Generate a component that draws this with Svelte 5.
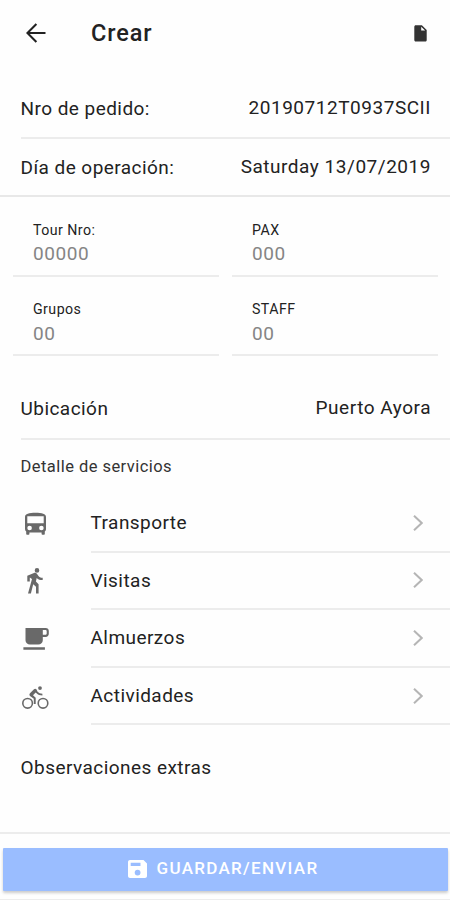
<script lang="ts">
  type IconName = 'bus' | 'walk' | 'cafe' | 'bike';

  const order = [
    { label: 'Nro de pedido:', value: '20190712T0937SCII' },
    { label: 'Día de operación:', value: 'Saturday 13/07/2019' }
  ];

  const fields = [
    { label: 'Tour Nro:', placeholder: '00000' },
    { label: 'PAX', placeholder: '000' },
    { label: 'Grupos', placeholder: '00' },
    { label: 'STAFF', placeholder: '00' }
  ];

  const services: { name: string; icon: IconName }[] = [
    { name: 'Transporte', icon: 'bus' },
    { name: 'Visitas', icon: 'walk' },
    { name: 'Almuerzos', icon: 'cafe' },
    { name: 'Actividades', icon: 'bike' }
  ];
</script>

{#snippet serviceIcon(name: IconName)}
  <svg class="service-icon" viewBox="0 0 30 30" aria-hidden="true">
    {#if name === 'bus'}
      <path fill-rule="evenodd" d="M4 8C4 4.800 8 3.800 14.500 3.800S25 4.800 25 8v12c0 1.100-.4 2-1.200 2.600V25c0 .5-.3.800-.8.800h-1.600c-.5 0-.8-.3-.8-.8v-1.600H8.400V25c0 .5-.3.800-.8.800H6c-.5 0-.8-.3-.8-.8v-2.400C4.400 22 4 21.100 4 20zM6.300 7.300v7h16.400v-7zM8.600 16.700a2.300 2.300 0 1 0 0 4.600a2.300 2.300 0 1 0 0-4.600zM20.400 16.700a2.300 2.300 0 1 0 0 4.600a2.300 2.300 0 1 0 0-4.600z" />
    {:else if name === 'walk'}
      <path d="M16 6.700a2.300 2.300 0 1 0 0-4.600a2.300 2.300 0 1 0 0 4.600zM11 13L7 27.500h2.900l2.300-9.300 2.800 2.500v6.800h2.600v-9.300L14.900 15.500l.8-3.600c1.400 1.500 3.400 2.200 6 2.200v-2.300c-2.100 0-3.700-.8-4.600-2.300l-1.200-1.700c-.5-.7-1.200-1-1.900-1-.4 0-.7.1-1 .2L6.300 9.700v5.900h2.500v-4.100z" />
    {:else if name === 'cafe'}
      <path fill-rule="evenodd" d="M4.500 4h20.200c1.900 0 3.100 1.300 3.100 3.100v2.700c0 1.900-1.300 3.100-3.100 3.100h-2.900v3.400c0 2.500-2 4.300-4.500 4.300H9c-2.500 0-4.500-1.800-4.500-4.300zM21.800 6.100v4.700h2.400c.9 0 1.500-.5 1.500-1.300V7.400c0-.8-.6-1.300-1.500-1.300zM2.400 23.200h21.500v2.600H2.400z" />
    {:else}
      <path fill-rule="evenodd" d="M6.600 15.700a5.600 5.600 0 1 0 0 11.200a5.600 5.600 0 1 0 0-11.200zm0 1.600a4 4 0 1 1 0 8a4 4 0 1 1 0-8zM22 15.700a5.600 5.600 0 1 0 0 11.200a5.600 5.600 0 1 0 0-11.200zm0 1.600a4 4 0 1 1 0 8a4 4 0 1 1 0-8z" />
      <path d="M19 8a1.900 1.900 0 1 0 0-3.800A1.900 1.900 0 0 0 19 8zM16.600 9.800c1.200 1.200 2.700 1.900 4.800 1.900v1.800c-2.400 0-4.500-.8-5.900-2.200l-.8-.8-2.700 2.700 2.700 2.500v6.400h-1.900v-5.300L9 13.900c-.8-.7-.8-1.900 0-2.700L13 7.300c.7-.7 1.700-.7 2.400 0z" />
    {/if}
  </svg>
{/snippet}

<div class="page">
  <header class="toolbar">
    <button class="back" aria-label="Volver">
      <svg viewBox="0 0 20 20" width="20" height="20">
        <path d="M10.400.9L1.400 10l9 9.100M1.500 10h18" />
      </svg>
    </button>
    <h1>Crear</h1>
    <svg class="doc" viewBox="0 0 13 17" width="13" height="17">
      <path d="M1.700.3h6.200L12.700 5v9.900c0 .9-.7 1.600-1.600 1.600H1.700C.9 16.500.3 15.800.3 15V1.900C.3 1 .9.300 1.700.3zM7.200 1.800v3.800h3.900z" />
    </svg>
  </header>

  <main>
    <section class="order">
      {#each order as row}
        <div class="row">
          <span>{row.label}</span>
          <span class="value">{row.value}</span>
        </div>
      {/each}
    </section>

    <section class="fields">
      {#each fields as field}
        <label class="field">
          <span>{field.label}</span>
          <input type="text" placeholder={field.placeholder} />
        </label>
      {/each}
    </section>

    <div class="row location">
      <span>Ubicación</span>
      <span class="value">Puerto Ayora</span>
    </div>

    <h2>Detalle de servicios</h2>
    <ul class="services">
      {#each services as service}
        <li>
          {@render serviceIcon(service.icon)}
          <div class="service">
            <span>{service.name}</span>
            <svg class="chevron" viewBox="0 0 10 16" width="10" height="16">
              <path d="M1 .8L8.700 8 1 15.200" />
            </svg>
          </div>
        </li>
      {/each}
    </ul>

    <p class="notes">Observaciones extras</p>
  </main>

  <footer>
    <button class="save">
      <svg viewBox="0 0 19 18" width="19" height="18">
        <path fill-rule="evenodd" d="M2 0h13.500L19 3.500V16c0 1.100-.9 2-2 2H2c-1.100 0-2-.9-2-2V2C0 .9.900 0 2 0zM2.700 2.700v3.200h9.800V2.700zM9.600 9.700a2.900 2.900 0 1 0 0 5.800a2.900 2.900 0 1 0 0-5.800z" />
      </svg>
      <span>GUARDAR/ENVIAR</span>
    </button>
  </footer>
</div>

<style>
  :global(body) {
    margin: 0;
    background: #fefefe;
  }
  .page {
    width: 450px;
    height: 900px;
    display: flex;
    flex-direction: column;
    overflow: hidden;
    box-sizing: border-box;
    border-bottom: 1px solid #ededed;
    background: #fefefe;
    color: #222;
    font-family: Roboto, sans-serif;
    font-size: 19px;
    letter-spacing: 0.45px;
  }
  button {
    border: 0;
    padding: 0;
    font: inherit;
  }
  .toolbar {
    display: flex;
    align-items: center;
    height: 66px;
    padding: 0 23px 0 26px;
  }
  .back {
    display: flex;
    width: 65px;
    background: none;
  }
  .back path {
    fill: none;
    stroke: #222;
    stroke-width: 2.1;
  }
  h1 {
    flex: 1;
    margin: 0;
    font-size: 23.5px;
    font-weight: 500;
    letter-spacing: 0.9px;
  }
  .doc {
    fill: #333;
  }
  main {
    flex: 1;
  }
  .order {
    margin-top: 13px;
    border-bottom: 2px solid #e8e8e8;
  }
  .row {
    display: flex;
    align-items: center;
    justify-content: space-between;
    height: 56px;
    margin-left: 20.5px;
    padding-right: 19px;
  }
  .order .row:first-child {
    height: 58px;
    border-bottom: 2px solid #ececec;
  }
  .value {
    margin-top: -2px;
    letter-spacing: 0.53px;
  }
  .fields {
    display: grid;
    grid-template-columns: 206px 206px;
    column-gap: 13px;
    padding-left: 13px;
  }
  .field {
    display: flex;
    flex-direction: column;
    height: 79.5px;
    padding: 23.5px 20px 0;
    box-sizing: border-box;
    border-bottom: 2px solid #ececec;
    font-size: 14.2px;
    line-height: 18px;
  }
  .field input {
    width: 100%;
    height: 24px;
    margin-top: 3px;
    padding: 0;
    border: 0;
    outline: 0;
    background: none;
    font: inherit;
    font-size: 19px;
    line-height: 22px;
    letter-spacing: 0.6px;
  }
  .field input::placeholder {
    color: #858585;
    opacity: 1;
  }
  .location {
    height: 60px;
    margin-top: 22px;
    border-bottom: 2px solid #ececec;
  }
  h2 {
    margin: 0;
    padding: 16px 20.5px 0;
    font-size: 16.5px;
    font-weight: 400;
    line-height: 22px;
    color: #333;
  }
  .services {
    margin: 17px 0 0;
    padding: 0;
    list-style: none;
  }
  li {
    display: flex;
    align-items: center;
    height: 57.6px;
    padding-left: 21px;
  }
  .service-icon {
    width: 30px;
    height: 30px;
    margin-right: 39.5px;
    fill: #696969;
  }
  .service {
    flex: 1;
    display: flex;
    align-items: center;
    justify-content: space-between;
    height: 100%;
    box-sizing: border-box;
    padding-right: 27px;
    border-bottom: 2px solid #ececec;
  }
  .chevron path {
    fill: none;
    stroke: #b5b5b5;
    stroke-width: 2;
  }
  .notes {
    margin: 31px 20.5px 0;
    line-height: 24px;
  }
  footer {
    padding: 14px 2px 8px 3px;
    border-top: 2px solid #ececec;
  }
  .save {
    display: flex;
    align-items: center;
    justify-content: center;
    gap: 10px;
    width: 100%;
    height: 43px;
    padding: 0 5px 3px 0;
    border-radius: 1px;
    background: #9abdff;
    box-shadow: 0 2px 3px rgba(0, 0, 0, 0.2);
    color: #fff;
    font-size: 17px;
    font-weight: 500;
    letter-spacing: 1.3px;
  }
  .save svg {
    margin-top: 1px;
    fill: #fff;
  }
</style>
